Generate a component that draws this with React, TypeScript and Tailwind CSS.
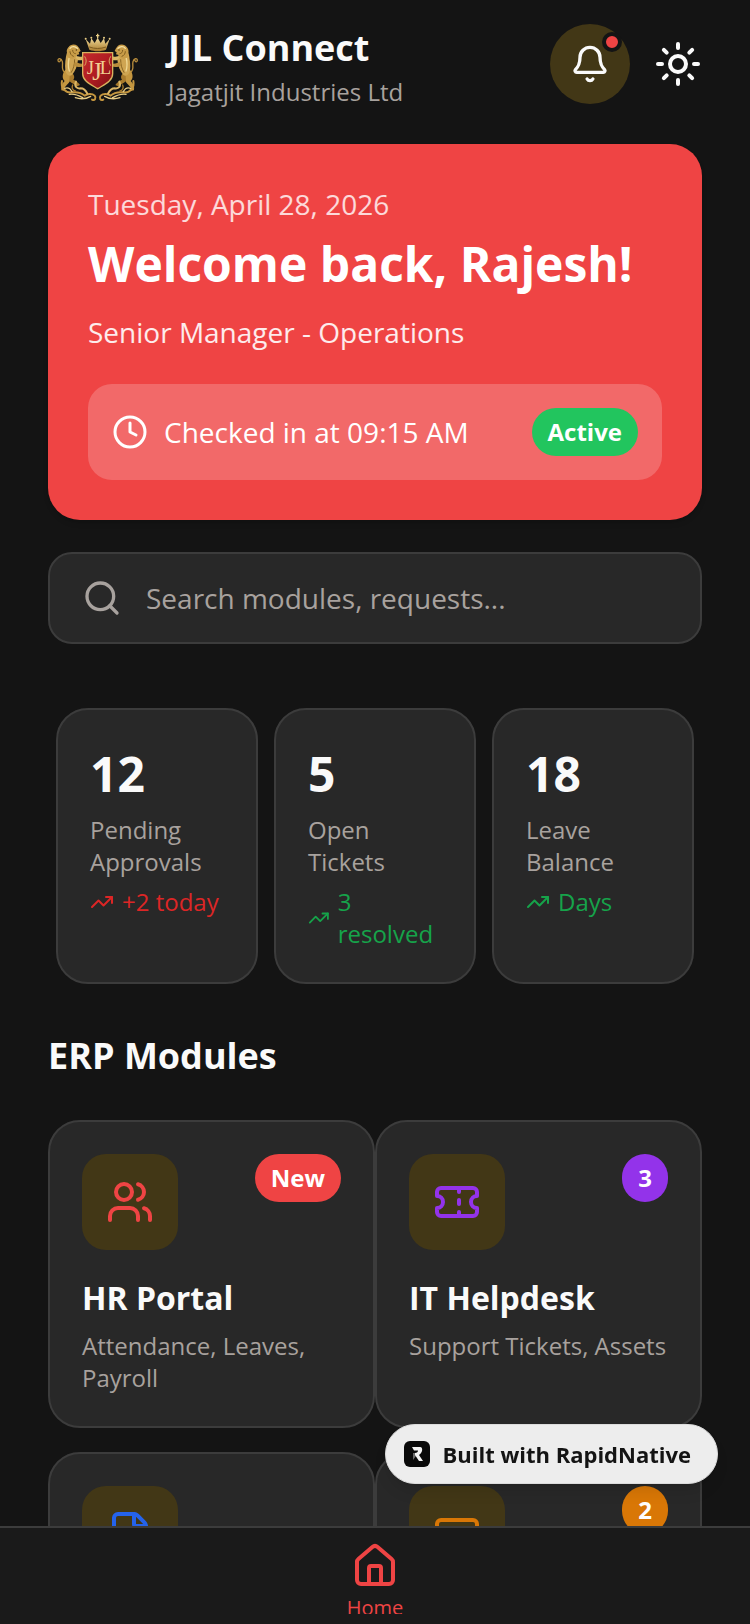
import {
  Bell,
  Clock,
  CreditCard,
  FileText,
  House,
  Search,
  Sun,
  Ticket,
  TrendingUp,
  Users,
  type LucideIcon,
} from "lucide-react";

type Stat = {
  value: string;
  label: string;
  trend: string;
  trendClass: string;
};

type Module = {
  id: string;
  title?: string;
  description?: string;
  icon: LucideIcon;
  iconClass: string;
  badge?: string;
  badgeClass?: string;
};

const stats: Stat[] = [
  {
    value: "12",
    label: "Pending Approvals",
    trend: "+2 today",
    trendClass: "text-[#dc2626]",
  },
  {
    value: "5",
    label: "Open Tickets",
    trend: "3 resolved",
    trendClass: "text-[#16a34a]",
  },
  {
    value: "18",
    label: "Leave Balance",
    trend: "Days",
    trendClass: "text-[#16a34a]",
  },
];

const modules: Module[] = [
  {
    id: "hr",
    title: "HR Portal",
    description: "Attendance, Leaves, Payroll",
    icon: Users,
    iconClass: "text-[#ef4444]",
    badge: "New",
    badgeClass: "bg-[#ef4444]",
  },
  {
    id: "helpdesk",
    title: "IT Helpdesk",
    description: "Support Tickets, Assets",
    icon: Ticket,
    iconClass: "text-[#9333ea]",
    badge: "3",
    badgeClass: "bg-[#9333ea]",
  },
  {
    id: "documents",
    icon: FileText,
    iconClass: "text-[#2563eb]",
  },
  {
    id: "finance",
    icon: CreditCard,
    iconClass: "text-[#d97706]",
    badge: "2",
    badgeClass: "bg-[#d97706]",
  },
];

// One supporter (lion + acanthus scroll), mirrored for the right side
function Supporter() {
  return (
    <g strokeLinecap="round" strokeLinejoin="round">
      {/* tail */}
      <path
        d="M44 142C32 132 40 120 37 110C34 100 24 98 24 106C24 112 30 112 31 107"
        fill="none"
        stroke="#b98d3c"
        strokeWidth="4"
      />
      {/* hind legs */}
      <path
        d="M46 134C36 146 36 160 44 168C36 176 32 186 34 196L44 198L42 192C46 182 56 176 60 168L70 150Z"
        fill="#c4963f"
      />
      <path
        d="M60 140C72 146 76 156 70 164C80 168 86 174 90 180L82 184C74 178 64 174 58 168Z"
        fill="#a87a2c"
      />
      {/* body */}
      <path
        d="M52 78C46 100 44 118 46 136C48 150 58 156 66 150C76 138 82 122 84 104L78 82Z"
        fill="#cfa552"
      />
      <path d="M58 96C54 112 54 126 58 138" fill="none" stroke="#f0d893" strokeWidth="4" />
      <path d="M74 104C74 120 70 132 64 142" fill="none" stroke="#8a6422" strokeWidth="3" />
      {/* forelegs */}
      <path
        d="M74 94C84 92 92 98 100 94L106 102C98 106 90 106 84 106Z"
        fill="#dcb766"
      />
      <path d="M74 112C82 112 90 118 100 116L102 124C92 128 80 126 72 122Z" fill="#b98d3c" />
      {/* mane and head */}
      <path
        d="M56 66C60 58 74 56 82 62L88 70L92 78L86 82L88 88L80 90C78 98 68 104 60 100C50 98 50 90 52 84C48 78 52 70 56 66Z"
        fill="#c99d48"
      />
      <path d="M60 70C66 62 76 64 82 70" fill="none" stroke="#f6e2a6" strokeWidth="4" />
      <path d="M60 80C60 86 64 92 70 94M68 76C68 82 72 86 76 86" fill="none" stroke="#805c1e" strokeWidth="3" />
      <circle cx="79" cy="75" r="2" fill="#4a3310" />
      {/* acanthus scroll */}
      <path
        d="M36 168C32 186 44 204 64 202C84 200 96 204 104 212C112 206 126 204 134 212C140 220 134 228 126 224"
        fill="none"
        stroke="#c4963f"
        strokeWidth="6"
      />
      <path
        d="M78 170C72 184 80 192 92 190C102 190 108 198 112 206"
        fill="none"
        stroke="#dcb766"
        strokeWidth="6"
      />
      <path
        d="M44 190C54 186 62 192 66 200M58 208C72 206 84 210 98 218M76 218C88 222 104 224 122 214"
        fill="none"
        stroke="#e9cd84"
        strokeWidth="4"
      />
      <path d="M68 180C64 188 68 196 76 198" fill="none" stroke="#a87a2c" strokeWidth="4" />
    </g>
  );
}

function CrestLogo() {
  return (
    <svg viewBox="0 0 96 96" className="size-24 shrink-0" role="img" aria-label="Jagatjit Industries crest">
      <defs>
        <linearGradient id="shield" x1="0" y1="0" x2="1" y2="1">
          <stop offset="0" stopColor="#c32a2c" />
          <stop offset="0.5" stopColor="#b01d22" />
          <stop offset="1" stopColor="#7d0f14" />
        </linearGradient>
        <linearGradient id="gold" x1="0" y1="0" x2="0" y2="1">
          <stop offset="0" stopColor="#f3dc9a" />
          <stop offset="1" stopColor="#a97c2e" />
        </linearGradient>
      </defs>
      <g transform="translate(2 9) scale(0.3333)">
        <Supporter />
        <g transform="translate(286 0) scale(-1 1)">
          <Supporter />
        </g>
        {/* crown */}
        <path
          d="M107 42L120 56L124 40L134 54L143 38L152 54L162 40L166 56L179 42L168 74C152 80 134 80 118 74Z"
          fill="url(#gold)"
        />
        <path d="M118 66C134 72 152 72 168 66" fill="none" stroke="#7d5a1e" strokeWidth="3" />
        <path d="M143 26V40M138 32H148" stroke="#e9cd84" strokeWidth="4" />
        <circle cx="107" cy="41" r="3" fill="#e9cd84" />
        <circle cx="124" cy="38" r="3" fill="#e9cd84" />
        <circle cx="162" cy="38" r="3" fill="#e9cd84" />
        <circle cx="179" cy="41" r="3" fill="#e9cd84" />
        {/* shield */}
        <path
          d="M98 83H188V146C188 168 164 178 143 191C122 178 98 168 98 146Z"
          fill="url(#shield)"
          stroke="#d8b25e"
          strokeWidth="4"
        />
        <path
          d="M104 94C110 104 110 112 104 122M182 94C176 104 176 112 182 122"
          fill="none"
          stroke="#d8a75e"
          strokeWidth="3"
        />
        <text x="110" y="148" fontSize="56" fill="#f0cf92" fontFamily="Liberation Serif, serif">
          J
        </text>
        <text x="127" y="164" fontSize="74" fill="#f0cf92" fontFamily="Liberation Serif, serif">
          J
        </text>
        <text x="149" y="148" fontSize="56" fill="#f0cf92" fontFamily="Liberation Serif, serif">
          L
        </text>
      </g>
    </svg>
  );
}

function StatCard({ stat }: { stat: Stat }) {
  return (
    <div className="rounded-[32px] border-2 border-[#3c3c3c] bg-[#282828] p-8">
      <p className="text-5xl leading-16 font-bold text-neutral-50">{stat.value}</p>
      <p className="mt-2 text-2xl text-[#a8a29e]">{stat.label}</p>
      <div className={`mt-2 flex items-center gap-2 text-2xl ${stat.trendClass}`}>
        <TrendingUp size={24} className="min-w-0" />
        <span>{stat.trend}</span>
      </div>
    </div>
  );
}

function ModuleCard({ module }: { module: Module }) {
  const Icon = module.icon;

  return (
    <button
      type="button"
      aria-label={module.title ?? module.id}
      className="flex flex-col rounded-[32px] border-2 border-[#3c3c3c] bg-[#282828] p-8 text-left"
    >
      <span className="mb-6 flex w-full items-start justify-between">
        <span className="flex size-24 items-center justify-center rounded-3xl bg-[#423716]">
          <Icon size={48} className={module.iconClass} />
        </span>
        {module.badge && (
          <span className={`rounded-full px-4 py-2 text-2xl font-bold text-white ${module.badgeClass}`}>
            {module.badge}
          </span>
        )}
      </span>
      {module.title && (
        <span className="text-[32px] leading-12 font-bold text-neutral-50">{module.title}</span>
      )}
      {module.description && (
        <span className="mt-2 text-2xl text-[#a8a29e]">{module.description}</span>
      )}
    </button>
  );
}

function App() {
  return (
    <div className="flex h-screen flex-col overflow-hidden bg-[#141414] font-['Open_Sans',sans-serif]">
      <main className="min-h-0 flex-1 overflow-y-auto px-12 [scrollbar-width:none]">
        <header className="flex items-center gap-6 py-4">
          <CrestLogo />
          <div className="flex-1">
            <h1 className="text-4xl leading-14 font-bold text-neutral-50">JIL Connect</h1>
            <p className="text-2xl text-[#a8a29e]">Jagatjit Industries Ltd</p>
          </div>
          <button
            type="button"
            aria-label="Notifications"
            className="relative flex size-20 items-center justify-center rounded-full bg-[#423716] text-neutral-50"
          >
            <Bell size={40} />
            <span className="absolute top-2 right-2 size-5 rounded-full border-4 border-[#141414] bg-[#ef4444]" />
          </button>
          <button type="button" aria-label="Toggle theme" className="text-neutral-50">
            <Sun size={48} />
          </button>
        </header>

        <section className="mt-4 rounded-[32px] bg-[#ef4444] p-10 shadow-md">
          <p className="text-[28px] leading-10 text-white/80">Tuesday, April 28, 2026</p>
          <h2 className="mt-2 text-5xl leading-16 font-bold text-white">Welcome back, Rajesh!</h2>
          <p className="mt-4 text-[28px] leading-10 text-white/90">Senior Manager - Operations</p>
          <div className="mt-8 flex items-center gap-4 rounded-3xl bg-white/20 p-6 text-white">
            <Clock size={36} />
            <span className="flex-1 text-[28px] leading-10">Checked in at 09:15 AM</span>
            <span className="rounded-full bg-[#22c55e] px-4 py-2 text-2xl font-bold">Active</span>
          </div>
        </section>

        <label className="mt-8 flex items-center gap-6 rounded-3xl border-2 border-[#3c3c3c] bg-[#282828] px-8 py-6">
          <Search size={40} className="text-[#a8a29e]" />
          <input
            type="search"
            aria-label="Search"
            placeholder="Search modules, requests..."
            className="h-10 min-w-0 flex-1 bg-transparent text-[28px] text-neutral-50 outline-none placeholder:text-[#a8a29e]"
          />
        </label>

        <section className="mx-2 mt-16 grid grid-cols-3 gap-4">
          {stats.map((stat) => (
            <StatCard key={stat.value} stat={stat} />
          ))}
        </section>

        <section className="mt-10 pb-12">
          <h2 className="mb-8 text-4xl leading-16 font-bold text-neutral-50">ERP Modules</h2>
          <div className="grid grid-cols-2 gap-y-6">
            {modules.map((module) => (
              <ModuleCard key={module.id} module={module} />
            ))}
          </div>
        </section>
      </main>

      <nav className="flex justify-center border-t-2 border-[#3c3c3c] bg-[#1a1a1a] pt-[14px] pb-[10px]">
        <a href="#home" className="flex h-18 flex-col items-center gap-1 overflow-hidden text-[#ef4444]">
          <House size={48} className="shrink-0" />
          <span className="text-xl">Home</span>
        </a>
      </nav>

      <a
        href="#built-with"
        className="fixed right-8 bottom-[140px] flex h-[60px] items-center gap-3 rounded-full border border-[#dcdcdc] bg-[#ededed] pr-[26px] pl-[18px] text-[22px] font-bold text-[#141414] shadow-lg"
      >
        <svg viewBox="0 0 26 26" className="size-[26px]" aria-hidden="true">
          <rect width="26" height="26" rx="6" fill="#0a0a0a" />
          <path d="M9 12H12V15L9 19Z" fill="#6b6b6b" />
          <path
            d="M8 6H16C18 6 18.500 8 18 10C17.500 12 16 13 15 14L19 20H15L11 14V12C13 12 14 11 14 9.500H10Z"
            fill="#f5f5f5"
          />
        </svg>
        Built with RapidNative
      </a>
    </div>
  );
}

export default App;
